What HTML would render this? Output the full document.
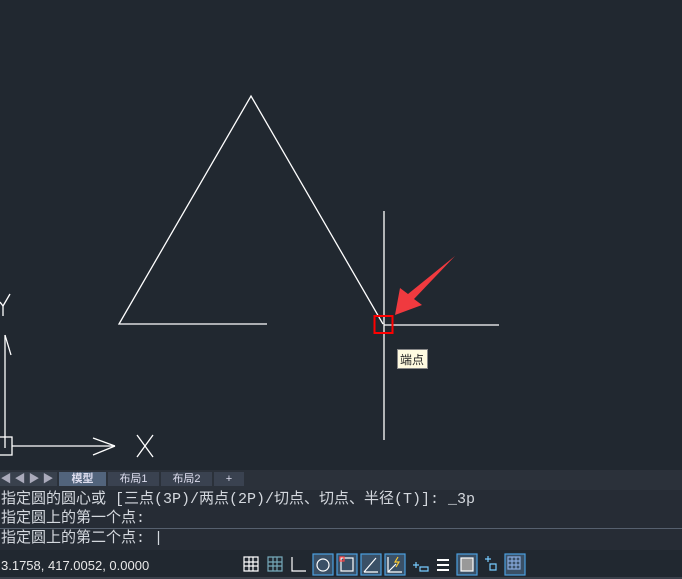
<!DOCTYPE html><html><head><meta charset="utf-8"><style>
body{margin:0;width:682px;height:579px;background:#212830;overflow:hidden;position:relative;font-family:"Liberation Mono","Noto Sans CJK SC",monospace}
.a{position:absolute}
.tab{position:absolute;top:472px;height:14px;background:#3a4250;color:#dde;font-size:11px;text-align:center;line-height:14px;font-family:"Liberation Sans","Noto Sans CJK SC",sans-serif}
.cmd{position:absolute;left:1px;color:#d4d8de;font-size:15px;white-space:pre;line-height:16px}
</style></head><body>
<svg class="a" style="left:0;top:0" width="682" height="470">
<g stroke="#fff" stroke-width="1.3" fill="none">
<polyline points="267,324 119,324 251,96 383,324"/>
<line x1="384" y1="211" x2="384" y2="440"/>
<line x1="384" y1="325" x2="499" y2="325"/>
<line x1="5" y1="335" x2="5" y2="448"/>
<line x1="5" y1="335" x2="11" y2="355"/>
<rect x="-2" y="437" width="14" height="18"/>
<line x1="12" y1="446" x2="115" y2="446"/>
<line x1="93" y1="438" x2="115" y2="446"/><line x1="93" y1="455" x2="115" y2="446"/>
<line x1="137" y1="435" x2="153" y2="457"/><line x1="153" y1="435" x2="137" y2="457"/>
<line x1="0" y1="302" x2="3" y2="306"/><line x1="10" y1="294" x2="3" y2="306"/><line x1="3" y1="306" x2="3" y2="316"/>
</g>
<rect x="374.5" y="316" width="18" height="17" fill="none" stroke="#f00" stroke-width="2"/>
<polygon points="395,315 400,288 408,294 455,256 414,299 422,305" fill="#f03a3f"/>
<rect x="397.5" y="349.5" width="30" height="19" fill="#fffbe0" stroke="#888"/>
<text x="400" y="364" font-size="12" fill="#222" font-family="Noto Sans CJK SC,sans-serif">端点</text>
</svg>
<div class="a" style="left:0;top:470px;width:682px;height:20px;background:#2b313a"></div>
<div class="tab" style="left:0;width:57px;color:#aab;background:#39414d;letter-spacing:3px">◀◀▶▶</div>
<div class="tab" style="left:59px;width:47px;background:#52647c;font-weight:bold">模型</div>
<div class="tab" style="left:108px;width:51px">布局1</div>
<div class="tab" style="left:161px;width:51px">布局2</div>
<div class="tab" style="left:214px;width:30px">+</div>
<div class="a" style="left:0;top:490px;width:682px;height:60px;background:#262c35"></div>
<div class="cmd" style="top:492px">指定圆的圆心或 [三点(3P)/两点(2P)/切点、切点、半径(T)]: _3p</div>
<div class="cmd" style="top:511px">指定圆上的第一个点:</div>
<div class="a" style="left:0;top:528px;width:682px;height:1px;background:#56606e"></div>
<div class="cmd" style="top:531px">指定圆上的第二个点: |</div>
<div class="a" style="left:0;top:551px;width:682px;height:26px;background:#212830"></div>
<div class="a" style="left:1px;top:558px;color:#e8e8e8;font-size:13px;font-family:'Liberation Sans',sans-serif">3.1758, 417.0052, 0.0000</div>
<svg class="a" style="left:240px;top:553px" width="290" height="24" stroke="#fff" fill="none" stroke-width="1.2">
<path d="M4 4h14v14H4zM4 9h14M4 13h14M9 4v14M13 4v14"/>
<path d="M28 4h14v14H28zM28 9h14M28 13h14M33 4v14M37 4v14" stroke="#7ab"/>
<path d="M52 4v14h14"/>
<rect x="73" y="1" width="20" height="21" fill="#3a5066" stroke="#4aa0e0"/><circle cx="83" cy="12" r="6"/>
<rect x="97" y="1" width="20" height="21" fill="#3a5066" stroke="#4aa0e0"/><rect x="101" y="5" width="12" height="13"/><rect x="100" y="4" width="4" height="4" stroke="#f44"/>
<rect x="121" y="1" width="20" height="21" fill="#3a5066" stroke="#4aa0e0"/><path d="M124 19h14M124 19l12-14"/>
<rect x="145" y="1" width="20" height="21" fill="#3a5066" stroke="#4aa0e0"/><path d="M148 4v15h14M148 19l8-8"/><path d="M158 4l-3 5h4l-3 5" stroke="#fc3"/>
<path d="M173 12h6M176 9v6M180 14h8v4h-8z" stroke="#7cf"/>
<path d="M197 7h12M197 12h12M197 17h12" stroke-width="2"/>
<rect x="217" y="1" width="20" height="21" fill="#3a5066" stroke="#4aa0e0"/><rect x="221" y="5" width="12" height="13" fill="#999"/>
<path d="M245 6h6M248 3v6M250 11h6v6h-6z" stroke="#7cf"/>
<rect x="265" y="1" width="20" height="21" fill="#3a5066" stroke="#4aa0e0"/><path d="M268 4h12v12H268zM268 8h12M268 12h12M272 4v12M276 4v12" stroke="#8ad"/>
</svg>
<div class="a" style="left:0;top:577px;width:682px;height:2px;background:#3a404a"></div>
</body></html>
